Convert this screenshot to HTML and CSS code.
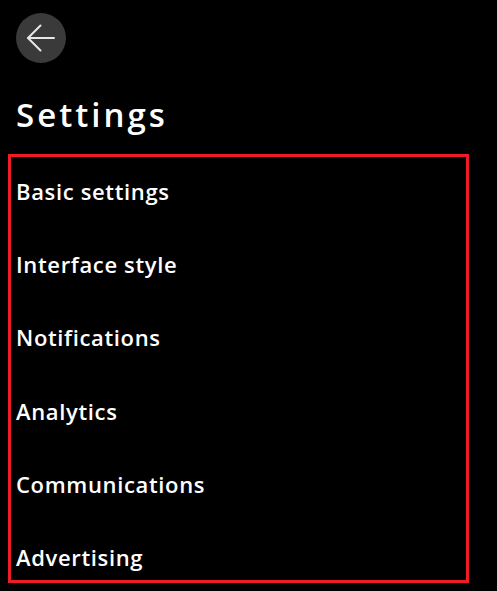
FILE: index.html
```html
<!DOCTYPE html>
<html lang="en">
<head>
    <meta charset="UTF-8">
    <meta name="viewport" content="width=device-width, initial-scale=1.0">
    <title>Settings</title>
    <link rel="stylesheet" href="styles.css">
</head>
<body>
    <div class="page">
        <button class="back-btn" aria-label="Back">
            <svg width="30" height="30" viewBox="0 0 30 30" fill="none" stroke="#e6e6e6" stroke-width="2" stroke-linecap="round" stroke-linejoin="round">
                <path d="M28 15H2"/>
                <path d="M14.5 2.5L2 15L14.5 27.5"/>
            </svg>
        </button>

        <h1 class="title">Settings</h1>

        <ul class="settings-list">
            <li>Basic settings</li>
            <li>Interface style</li>
            <li>Notifications</li>
            <li>Analytics</li>
            <li>Communications</li>
            <li>Advertising</li>
        </ul>
    </div>
</body>
</html>
```

FILE: styles.css
```css
* {
    margin: 0;
    padding: 0;
    box-sizing: border-box;
}

body {
    background-color: #000000;
    color: #ffffff;
    font-family: 'Open Sans', 'Noto Sans', sans-serif;
}

.page {
    padding-top: 13px;
}

.back-btn {
    display: flex;
    align-items: center;
    justify-content: center;
    width: 50px;
    height: 50px;
    margin-left: 16px;
    border: none;
    border-radius: 50%;
    background-color: #3a3a3a;
    cursor: pointer;
}

.title {
    margin: 32px 0 0 16px;
    font-size: 33px;
    font-weight: 600;
    line-height: 40px;
    letter-spacing: 3px;
}

/* highlighted list */
.settings-list {
    list-style: none;
    width: 461px;
    height: 429px;
    margin: 19px 0 0 8px;
    padding: 0 5px;
    border: 3px solid #ee1c25;
}

.settings-list li {
    height: 73.2px;
    padding-top: 20px;
    font-size: 22px;
    font-weight: 600;
    line-height: 28px;
    letter-spacing: 0.65px;
}
```
